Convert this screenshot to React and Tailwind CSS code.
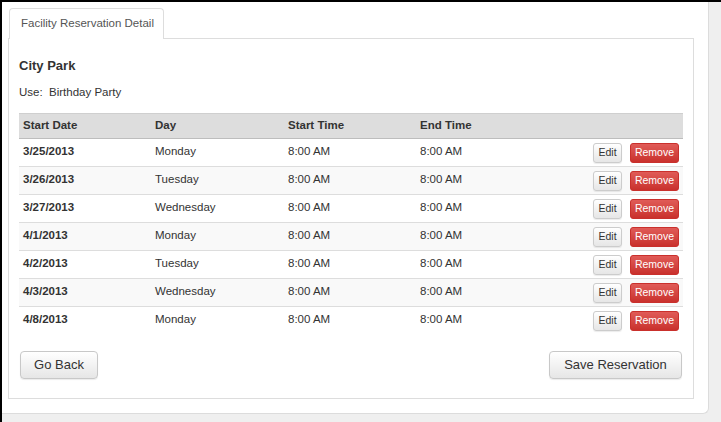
import React from 'react';

const rows = [
  { date: '3/25/2013', day: 'Monday' },
  { date: '3/26/2013', day: 'Tuesday' },
  { date: '3/27/2013', day: 'Wednesday' },
  { date: '4/1/2013', day: 'Monday' },
  { date: '4/2/2013', day: 'Tuesday' },
  { date: '4/3/2013', day: 'Wednesday' },
  { date: '4/8/2013', day: 'Monday' },
];

const App = () => {
  return (
    <div
      className="w-[721px] h-[422px] border-t-2 border-l-2 border-black bg-[#efefef] overflow-hidden"
      style={{ fontFamily: '"Liberation Sans", Arial, sans-serif' }}
    >
      <div className="w-[707px] h-[412px] bg-white border-r border-b border-[#dcdcdc] rounded-br-[6px] pt-[6px] pl-[6px]">
        {/* Tab */}
        <div className="ml-px w-[155px] h-[31px] bg-white border border-b-0 border-[#dddddd] rounded-t-[4px] relative z-10 flex items-center pl-[11px] text-[11.5px] text-[#555]">
          Facility Reservation Detail
        </div>

        {/* Panel */}
        <div className="-mt-px w-[686px] h-[361px] border border-[#dddddd] px-[10px] pt-[17px]">
          <div className="h-[20px] leading-[20px] text-[13px] font-bold text-[#333]">City Park</div>
          <div className="mt-[7px] h-[18px] leading-[18px] text-[11.5px] text-[#333]">
            Use:&nbsp; Birthday Party
          </div>

          <table className="mt-[12px] w-[664px] border-collapse text-[11.5px] text-[#333]">
            <thead>
              <tr className="h-[25px] bg-[#dddddd] border-t border-t-[#cfcfcf] border-b border-b-[#bdbdbd]">
                <th className="w-[132px] text-left font-bold pl-[4px] py-0">Start Date</th>
                <th className="w-[133px] text-left font-bold pl-[4px] py-0">Day</th>
                <th className="w-[132px] text-left font-bold pl-[4px] py-0">Start Time</th>
                <th className="w-[132px] text-left font-bold pl-[4px] py-0">End Time</th>
                <th></th>
              </tr>
            </thead>
            <tbody>
              {rows.map((r, i) => (
                <tr
                  key={i}
                  className={`h-[28px] ${i % 2 === 1 ? 'bg-[#f9f9f9]' : 'bg-white'} ${i < rows.length - 1 ? 'border-b border-[#dddddd]' : ''}`}
                >
                  <td className="pl-[4px] pb-[2px] font-bold">{r.date}</td>
                  <td className="pl-[4px] pb-[2px]">{r.day}</td>
                  <td className="pl-[4px] pb-[2px]">8:00 AM</td>
                  <td className="pl-[4px] pb-[2px]">8:00 AM</td>
                  <td className="pr-[4px]">
                    <div className="flex justify-end items-center gap-[8px]">
                      <button className="h-[20px] w-[29px] rounded-[3px] border border-[#cccccc] bg-gradient-to-b from-white to-[#e6e6e6] text-[10.5px] text-[#333] shadow-[0_1px_1px_rgba(0,0,0,0.08)]">
                        Edit
                      </button>
                      <button className="h-[20px] w-[49px] rounded-[3px] border border-[#c9302c] bg-gradient-to-b from-[#e05b57] to-[#c9302c] text-[10.5px] text-white">
                        Remove
                      </button>
                    </div>
                  </td>
                </tr>
              ))}
            </tbody>
          </table>

          <div className="mt-[16px] flex justify-between pr-[1px] pl-[1px]">
            <button className="h-[28px] w-[78px] rounded-[4px] border border-[#c8c8c8] bg-gradient-to-b from-white to-[#e6e6e6] text-[13px] text-[#333] shadow-[0_1px_1px_rgba(0,0,0,0.08)]">
              Go Back
            </button>
            <button className="h-[28px] w-[133px] rounded-[4px] border border-[#c8c8c8] bg-gradient-to-b from-white to-[#e6e6e6] text-[13px] text-[#333] shadow-[0_1px_1px_rgba(0,0,0,0.08)]">
              Save Reservation
            </button>
          </div>
        </div>
      </div>
    </div>
  );
};

export default App;
